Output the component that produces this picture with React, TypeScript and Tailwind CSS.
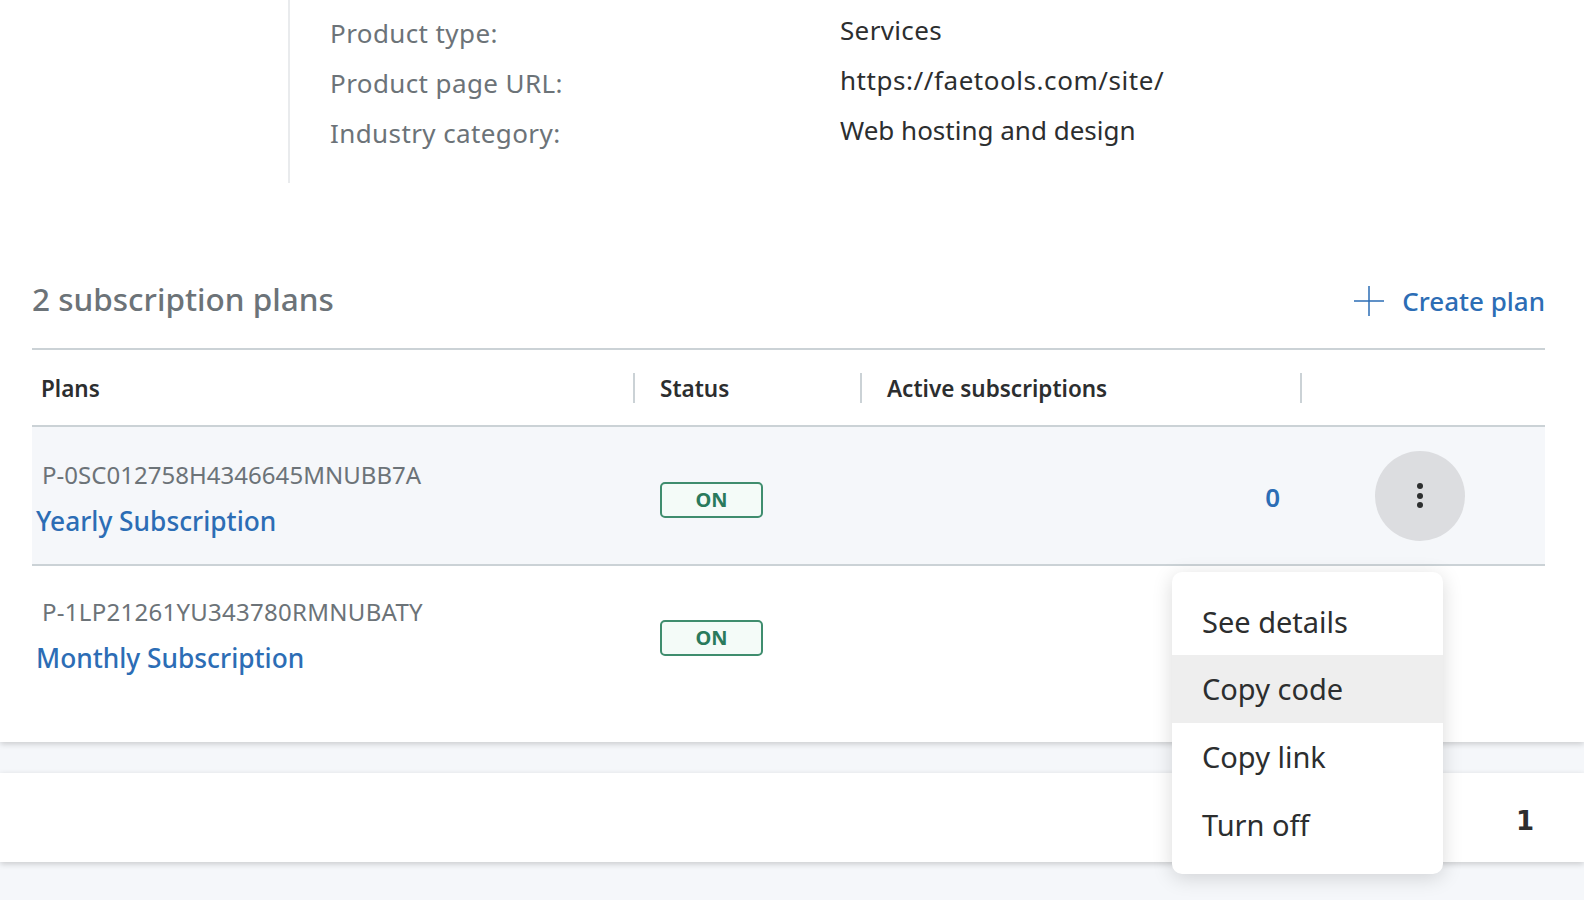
const font = "font-['Noto_Sans',sans-serif]";

const details = [
  { label: "Product type:", value: "Services", spacing: "tracking-[0.35px]" },
  { label: "Product page URL:", value: "https://faetools.com/site/", spacing: "tracking-[0.55px]" },
  { label: "Industry category:", value: "Web hosting and design", spacing: "tracking-normal" },
];

const plans = [
  { code: "P-0SC012758H4346645MNUBB7A", name: "Yearly Subscription", active: true },
  { code: "P-1LP21261YU343780RMNUBATY", name: "Monthly Subscription", active: false },
];

function OnBadge({ className }: { className: string }) {
  return (
    <div className={`w-[103px] h-[36px] rounded-[5px] border-2 border-[#3f8d6e] bg-[#f4fbf8] flex items-center justify-center text-[20px] font-bold text-[#2a7a5c] ${className}`}>
      ON
    </div>
  );
}

export default function App() {
  return (
    <div className={`relative h-[900px] overflow-hidden bg-[#f5f7fa] ${font}`}>
      <div className="bg-white h-[742px] shadow-[0_2px_6px_rgba(0,0,0,0.18)]">
        {/* product details */}
        <div className="flex h-[183px]">
          <div className="w-[290px] border-r-2 border-[#e9ebed]" />
          <div className="pl-[40px] pt-[8px] flex flex-col">
            {details.map((d) => (
              <div key={d.label} className="flex h-[50px] items-center">
                <span className="w-[510px] text-[26px] tracking-[0.4px] text-[#6c7378]">{d.label}</span>
                <span className={`text-[26px] text-[#2c2e2f] -mt-[5px] ${d.spacing}`}>{d.value}</span>
              </div>
            ))}
          </div>
        </div>

        <div className="ml-[32px] mr-[39px]">
          <div className="flex justify-between items-center h-[165px] pt-[66px]">
            <h2 className="text-[31.5px] font-medium text-[#6c7378]">2 subscription plans</h2>
            <a className="flex items-center gap-[18px] mt-[5px] text-[26px] font-medium text-[#2c6db5]">
              <svg width="30" height="30" viewBox="0 0 30 30" fill="none" stroke="#2c6db5" strokeWidth="1.5">
                <path d="M15 0v30M0 15h30" />
              </svg>
              Create plan
            </a>
          </div>

          {/* table */}
          <div className="grid grid-cols-[603px_227px_440px_243px] h-[79px] items-center border-t-2 border-b-2 border-[#cbd2d6] text-[22.5px] font-semibold text-[#2c2e2f]">
            <div className="pl-[9px] pt-[3px] h-[30px] flex items-center border-r-2 border-[#cbd2d6]">Plans</div>
            <div className="pl-[25px] pt-[3px] h-[30px] flex items-center border-r-2 border-[#cbd2d6]">Status</div>
            <div className="pl-[25px] pt-[3px] h-[30px] flex items-center border-r-2 border-[#cbd2d6]">Active subscriptions</div>
            <div />
          </div>

          {plans.map((p) => (
            <div
              key={p.code}
              className={`grid grid-cols-[603px_227px_440px_243px] items-center ${p.active ? "h-[139px] bg-[#f5f7fa] border-b-2 border-[#cbd2d6]" : "h-[136px]"}`}
            >
              <div className={`flex flex-col ${p.active ? "pt-[6px]" : "pt-[4px]"}`}>
                <span className={`pl-[10px] text-[24px] leading-[30px] text-[#6c7378] ${p.active ? "tracking-[0.03px]" : "tracking-[0.27px]"}`}>{p.code}</span>
                <a className="pl-[4px] mt-[14px] text-[26.3px] leading-[34px] font-medium text-[#2c6db5]">{p.name}</a>
              </div>
              <div className="pl-[25px]">
                <OnBadge className={p.active ? "mt-[9px]" : "mt-[8px]"} />
              </div>
              <div className="pr-[22px] pt-[3px] text-right text-[26px] font-semibold text-[#2c6db5]">{p.active ? "0" : ""}</div>
              <div className="pl-[73px]">
                {p.active && (
                  <div className="w-[90px] h-[90px] rounded-full bg-[#dcdde0] flex flex-col items-center justify-center gap-[3.5px]">
                    <span className="w-[6px] h-[6px] rounded-full bg-[#2c2e2f]" />
                    <span className="w-[6px] h-[6px] rounded-full bg-[#2c2e2f]" />
                    <span className="w-[6px] h-[6px] rounded-full bg-[#2c2e2f]" />
                  </div>
                )}
              </div>
            </div>
          ))}
        </div>
      </div>

      {/* pagination strip */}
      <div className="mt-[31px] h-[89px] bg-white shadow-[0_2px_6px_rgba(0,0,0,0.18)] flex items-center justify-end pr-[50px] pt-[8px] font-['DejaVu_Sans',sans-serif] text-[26px] font-bold text-[#2c2e2f]">
        1
      </div>

      {/* row menu */}
      <div className="absolute left-[1172px] top-[572px] w-[271px] h-[302px] rounded-[10px] bg-white shadow-[0_4px_20px_rgba(0,0,0,0.15)] overflow-hidden pt-[16px] text-[29px] text-[#2c2e2f]">
        <div className="h-[67px] pl-[30px] flex items-center">See details</div>
        <div className="h-[68px] pl-[30px] flex items-center bg-[#eeeeee]">Copy code</div>
        <div className="h-[68px] pl-[30px] flex items-center">Copy link</div>
        <div className="h-[68px] pl-[30px] flex items-center">Turn off</div>
      </div>
    </div>
  );
}
